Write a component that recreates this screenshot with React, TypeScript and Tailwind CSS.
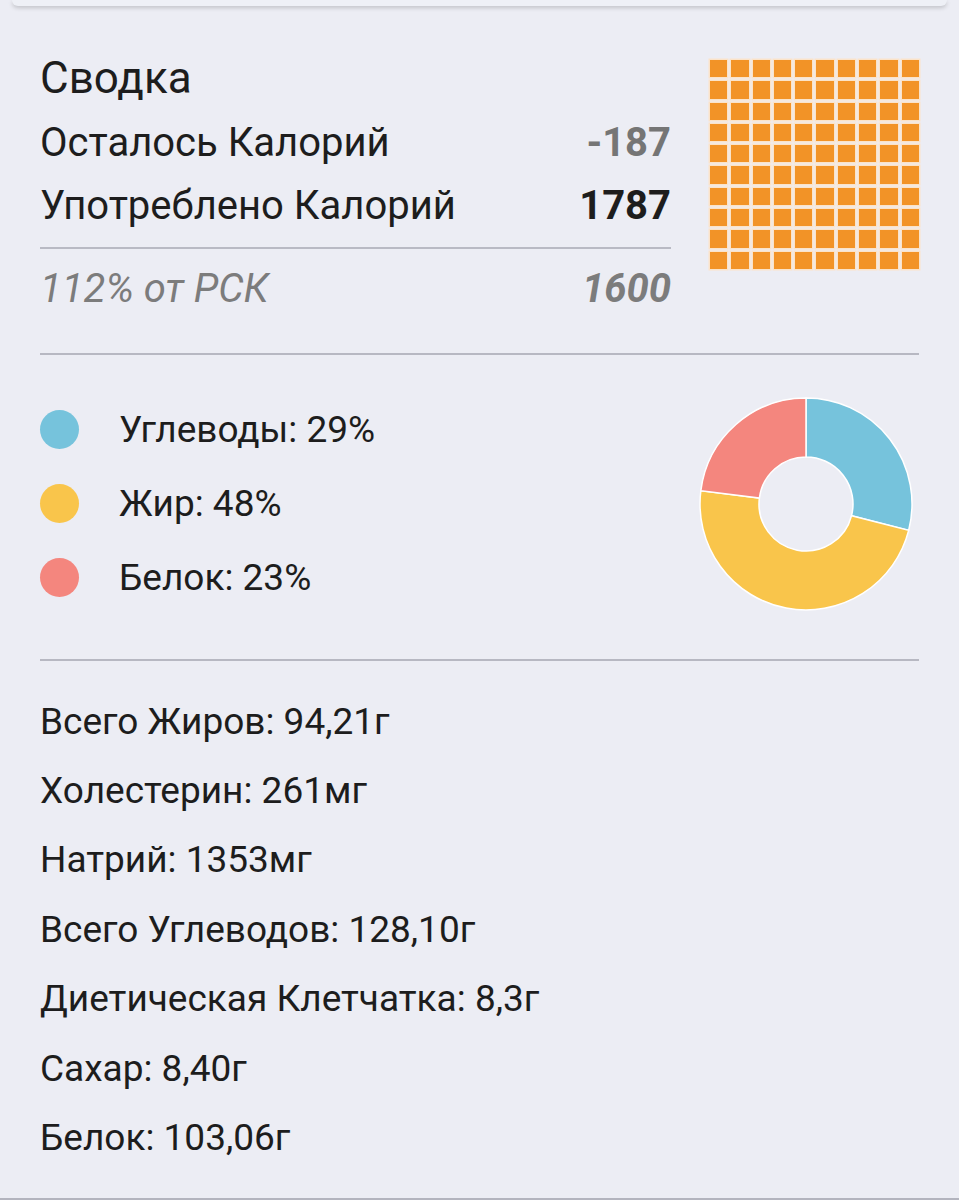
import React from "react";

const macros = [
  { label: "Углеводы: 29%", value: 29, color: "#76c3dc", dot: "bg-[#76c3dc]" },
  { label: "Жир: 48%", value: 48, color: "#f9c54b", dot: "bg-[#f9c54b]" },
  { label: "Белок: 23%", value: 23, color: "#f4867e", dot: "bg-[#f4867e]" },
];

const nutrients = [
  "Всего Жиров: 94,21г",
  "Холестерин: 261мг",
  "Натрий: 1353мг",
  "Всего Углеводов: 128,10г",
  "Диетическая Клетчатка: 8,3г",
  "Сахар: 8,40г",
  "Белок: 103,06г",
];

function arcPath(cx: number, cy: number, R: number, r: number, a0: number, a1: number) {
  const pt = (rad: number, a: number) => {
    const t = ((a - 90) * Math.PI) / 180;
    return `${(cx + rad * Math.cos(t)).toFixed(2)} ${(cy + rad * Math.sin(t)).toFixed(2)}`;
  };
  const large = a1 - a0 > 180 ? 1 : 0;
  return `M ${pt(R, a0)} A ${R} ${R} 0 ${large} 1 ${pt(R, a1)} L ${pt(r, a1)} A ${r} ${r} 0 ${large} 0 ${pt(r, a0)} Z`;
}

function Donut() {
  let start = 0;
  return (
    <svg width="214" height="214" viewBox="0 0 214 214">
      {macros.map((m) => {
        const end = start + (m.value / 100) * 360;
        const d = arcPath(107, 107, 106, 47, start, end);
        start = end;
        return <path key={m.label} d={d} fill={m.color} stroke="#ffffff" strokeWidth="1.5" />;
      })}
    </svg>
  );
}

function CalorieGrid() {
  return (
    <div className="grid grid-cols-10 gap-[4px] w-[209px] h-[209px]">
      {Array.from({ length: 100 }).map((_, i) => (
        <div key={i} className="bg-[#f29327] ring-[1.5px] ring-[#fbe3c9]" />
      ))}
    </div>
  );
}

export default function App() {
  return (
    <div className="relative w-[959px] h-[1200px] overflow-hidden bg-[#ecedf4] text-[#1d1d1d] font-['Roboto',sans-serif]">
      {/* tail of the card above */}
      <div className="mx-[12px] h-[6px] rounded-b-[10px] bg-[#eef0f6] shadow-[0_2px_4px_rgba(0,0,0,0.18)]" />

      <div className="px-[40px]">
        {/* Summary */}
        <div className="flex justify-between">
          <div className="w-[631px] pt-[49px]">
            <h2 className="text-[44px] leading-[46px]">Сводка</h2>
            <div className="mt-[10px] flex justify-between text-[40px] leading-[63px]">
              <span>Осталось Калорий</span>
              <span className="font-bold text-[#757575]">-187</span>
            </div>
            <div className="flex justify-between text-[40px] leading-[63px]">
              <span>Употреблено Калорий</span>
              <span className="font-bold">1787</span>
            </div>
            <div className="mt-[10px] h-[1.5px] bg-[#b9bac4]" />
            <div className="mt-[8px] flex justify-between text-[40px] leading-[63px] italic text-[#7c7c7c]">
              <span>112% от РСК</span>
              <span className="font-bold">1600</span>
            </div>
          </div>
          <div className="pt-[54px]">
            <CalorieGrid />
          </div>
        </div>

        <div className="mt-[33px] h-[2px] bg-[#b7b8c2]" />

        {/* Macros */}
        <div className="mt-[38px] flex items-center justify-between">
          <div>
            {macros.map((m) => (
              <div key={m.label} className="flex items-center h-[74px]">
                <span className={`w-[39px] h-[39px] rounded-full ${m.dot}`} />
                <span className="ml-[40px] text-[37px]">{m.label}</span>
              </div>
            ))}
          </div>
          <div className="mr-[6px]">
            <Donut />
          </div>
        </div>

        <div className="mt-[44px] h-[2px] bg-[#b7b8c2]" />

        {/* Nutrients */}
        <div className="mt-[26px]">
          {nutrients.map((n) => (
            <div key={n} className="text-[37px] leading-[69.4px]">
              {n}
            </div>
          ))}
        </div>
      </div>

      <div className="absolute bottom-0 left-0 right-0 h-[2px] bg-[#b3b4be]" />
    </div>
  );
}
